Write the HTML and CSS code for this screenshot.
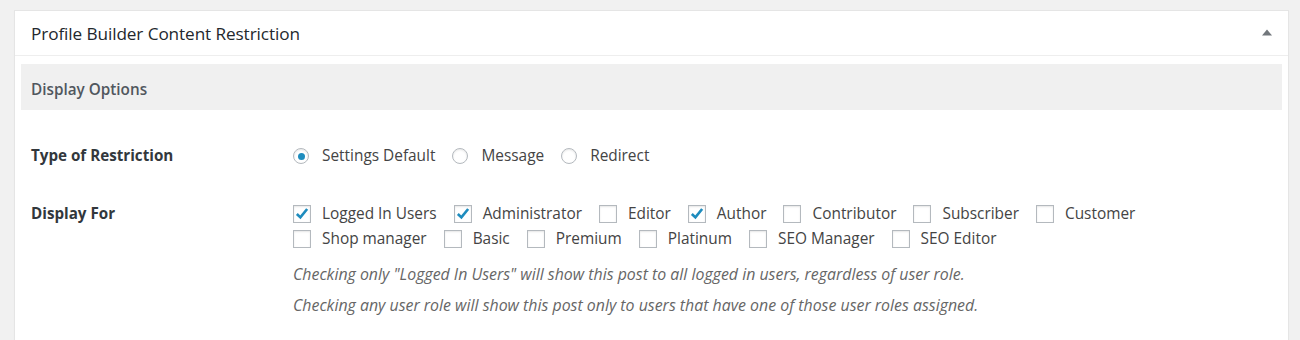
FILE: index.html
```html
<!DOCTYPE html>
<html lang="en">
<head>
<meta charset="utf-8">
<title>Profile Builder Content Restriction</title>
<link rel="stylesheet" href="styles.css">
</head>
<body>
<div class="postbox">
  <div class="postbox-header">
    <h2 class="hndle">Profile Builder Content Restriction</h2>
    <svg class="toggle" width="10" height="7" viewBox="0 0 10 7"><polygon points="5,0.5 10,6.5 0,6.5" fill="#72777c"/></svg>
  </div>
  <div class="inside">
    <div class="section-title">Display Options</div>

    <div class="form-row">
      <div class="form-label">Type of Restriction</div>
      <div class="form-field">
        <div class="options">
          <label class="opt"><span class="radio checked"></span>Settings Default</label>
          <label class="opt"><span class="radio"></span>Message</label>
          <label class="opt"><span class="radio"></span>Redirect</label>
        </div>
      </div>
    </div>

    <div class="form-row">
      <div class="form-label">Display For</div>
      <div class="form-field">
        <div class="options">
          <label class="opt"><span class="checkbox checked"><svg viewBox="0 0 18 18"><path d="M3.2 9 L7.2 12.8 L14.8 3.4" /></svg></span>Logged In Users</label>
          <label class="opt"><span class="checkbox checked"><svg viewBox="0 0 18 18"><path d="M3.2 9 L7.2 12.8 L14.8 3.4" /></svg></span>Administrator</label>
          <label class="opt"><span class="checkbox"></span>Editor</label>
          <label class="opt"><span class="checkbox checked"><svg viewBox="0 0 18 18"><path d="M3.2 9 L7.2 12.8 L14.8 3.4" /></svg></span>Author</label>
          <label class="opt"><span class="checkbox"></span>Contributor</label>
          <label class="opt"><span class="checkbox"></span>Subscriber</label>
          <label class="opt"><span class="checkbox"></span>Customer</label>
        </div>
        <div class="options">
          <label class="opt"><span class="checkbox"></span>Shop manager</label>
          <label class="opt"><span class="checkbox"></span>Basic</label>
          <label class="opt"><span class="checkbox"></span>Premium</label>
          <label class="opt"><span class="checkbox"></span>Platinum</label>
          <label class="opt"><span class="checkbox"></span>SEO Manager</label>
          <label class="opt"><span class="checkbox"></span>SEO Editor</label>
        </div>
        <p class="description first">Checking only "Logged In Users" will show this post to all logged in users, regardless of user role.</p>
        <p class="description">Checking any user role will show this post only to users that have one of those user roles assigned.</p>
      </div>
    </div>
  </div>
</div>
</body>
</html>
```

FILE: styles.css
```css
html, body {
  margin: 0;
  padding: 0;
}
body {
  background: #f1f1f1;
  font-family: "Open Sans", "Noto Sans", "Liberation Sans", sans-serif;
  color: #444;
  padding: 10px 11px 0 14px;
}
.postbox {
  background: #fff;
  border: 1px solid #e5e5e5;
  box-shadow: 0 1px 1px rgba(0,0,0,0.04);
  min-height: 400px;
}
.postbox-header {
  height: 44px;
  border-bottom: 1px solid #eee;
  display: flex;
  align-items: center;
  justify-content: space-between;
  padding: 0 16px 0 16px;
}
.hndle {
  margin: 0;
  font-size: 17.2px;
  font-weight: 400;
  color: #23282d;
  letter-spacing: -0.1px;
}
.toggle {
  display: block;
  margin-top: -2px;
}
.inside {
  padding: 8px 6px 0 6px;
}
.section-title {
  background: #f0f0f0;
  height: 46px;
  box-sizing: border-box;
  padding-top: 3px;
  display: flex;
  align-items: center;
  padding-left: 10px;
  font-size: 15.3px;
  font-weight: 600;
  color: #50575e;
}
.form-row {
  display: grid;
  grid-template-columns: 272px 1fr;
  margin-top: 34px;
}
.form-label {
  padding-left: 10px;
  font-size: 15.2px;
  font-weight: 700;
  color: #32373c;
  line-height: 24px;
  margin-top: -1px;
}
.options {
  display: flex;
  flex-wrap: nowrap;
  line-height: 24px;
  height: 24px;
}
.options + .options {
  margin-top: 1px;
}
.opt {
  display: flex;
  align-items: center;
  font-size: 15.4px;
  color: #444;
  margin-right: 17px;
  white-space: nowrap;
}
.radio {
  box-sizing: border-box;
  width: 16px;
  height: 16px;
  border: 1px solid #b4b9be;
  border-radius: 50%;
  box-shadow: inset 0 1px 2px rgba(0,0,0,0.1);
  margin-right: 13px;
  display: flex;
  align-items: center;
  justify-content: center;
  background: #fff;
}
.radio.checked::after {
  content: "";
  width: 7px;
  height: 7px;
  border-radius: 50%;
  background: #1e8cbe;
}
.checkbox {
  box-sizing: border-box;
  width: 18px;
  height: 18px;
  border: 1px solid #b4b9be;
  box-shadow: inset 0 1px 2px rgba(0,0,0,0.1);
  margin-right: 11px;
  background: #fff;
  display: flex;
}
.checkbox svg {
  width: 16px;
  height: 16px;
}
.checkbox svg path {
  fill: none;
  stroke: #1e8cbe;
  stroke-width: 3;
}
.description {
  margin: 0;
  font-size: 15.9px;
  font-style: italic;
  color: #666;
  line-height: 22px;
  margin-top: 9px;
}
.description.first {
  margin-top: 12px;
}
```
